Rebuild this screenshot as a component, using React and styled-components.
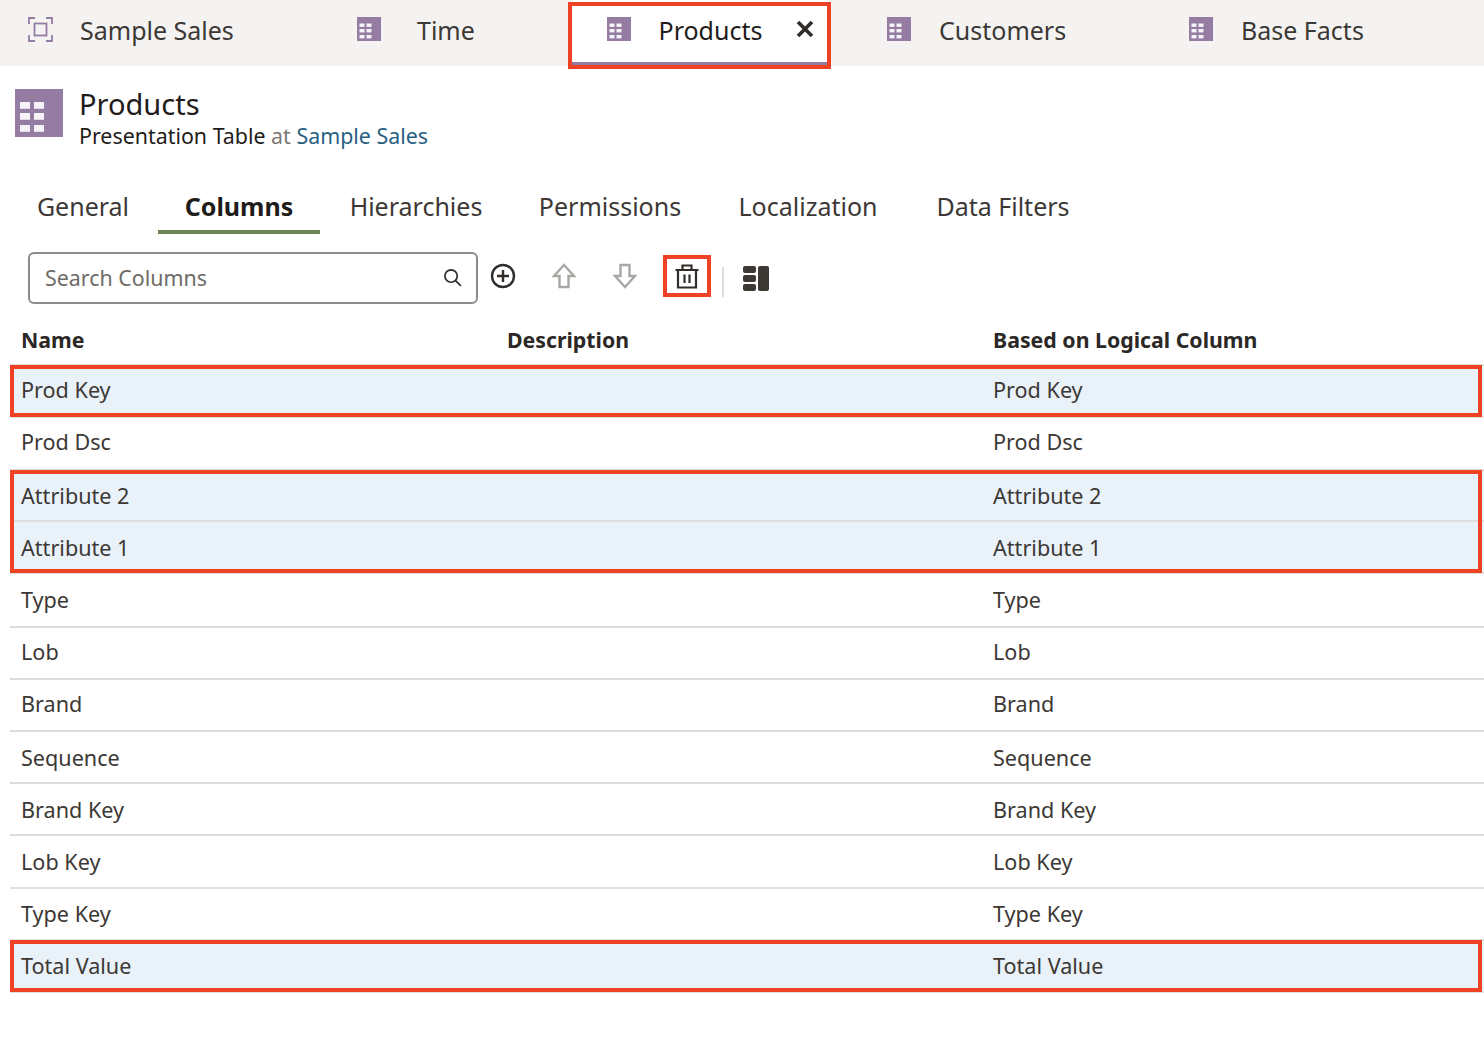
import React from "react";
import styled, { createGlobalStyle } from "styled-components";

const Global = createGlobalStyle`
  html, body { margin: 0; padding: 0; background: #fff; }
  body { font-family: "Noto Sans", "Open Sans", sans-serif; color: #312d2a; }
`;

const Page = styled.div`
  width: 1484px;
  height: 1053px;
  overflow: hidden;
`;

const TabBar = styled.div`
  display: flex;
  height: 66px;
  background: #f4f3f1;
`;

const Tab = styled.div`
  position: relative;
  box-sizing: border-box;
  display: flex;
  align-items: center;
  width: ${(p) => p.$w}px;
  padding-left: ${(p) => p.$pad}px;
  padding-bottom: 6px;
  gap: ${(p) => p.$gap}px;
  font-size: 25px;
  background: ${(p) => (p.$active ? "#fff" : "transparent")};
  color: ${(p) => (p.$active ? "#1f1c1a" : "#3c3835")};
  ${(p) => p.$active && "border-bottom: 4px solid #947ca3; padding-bottom: 2px;"}
  > svg:first-child {
    margin-top: -2px;
  }
  ${(p) =>
    p.$active &&
    `&::after {
      content: "";
      position: absolute;
      inset: 2px -3px -7px -3px;
      border: 4px solid #ef4123;
      pointer-events: none;
    }`}
`;

const Close = styled.svg`
  position: absolute;
  right: 14px;
  top: 20px;
`;

const Header = styled.div`
  display: flex;
  gap: 16px;
  padding: 23px 0 0 15px;
`;

const TitleBlock = styled.div`
  display: flex;
  flex-direction: column;
  margin-top: -3px;
`;

const Title = styled.div`
  font-size: 29px;
  line-height: 36px;
  color: #1f1c1a;
`;

const Subtitle = styled.div`
  font-size: 21.4px;
  line-height: 28px;
  color: #1f1c1a;
`;

const Muted = styled.span`
  color: #7a7672;
`;

const Link = styled.span`
  color: #29607f;
`;

const Tabs = styled.div`
  display: flex;
  margin: 32px 0 0 10px;
  height: 52px;
`;

const SubTab = styled.div`
  box-sizing: border-box;
  display: flex;
  align-items: center;
  justify-content: center;
  width: ${(p) => p.$w}px;
  height: 52px;
  padding-right: ${(p) => p.$pr || 0}px;
  font-size: 25px;
  font-weight: ${(p) => (p.$active ? 700 : 400)};
  color: ${(p) => (p.$active ? "#1f1c1a" : "#3c3835")};
  border-bottom: 4px solid ${(p) => (p.$active ? "#6b8355" : "transparent")};
`;

const Toolbar = styled.div`
  display: flex;
  align-items: center;
  height: 52px;
  margin: 18px 0 0 28px;
`;

const Search = styled.div`
  box-sizing: border-box;
  display: flex;
  align-items: center;
  justify-content: space-between;
  width: 450px;
  height: 52px;
  padding: 0 14px 2px 15px;
  border: 2px solid #8f8b87;
  border-radius: 6px;
  font-size: 21.4px;
  color: #6f6b67;
`;

const ToolButton = styled.div`
  box-sizing: border-box;
  flex: none;
  display: flex;
  align-items: center;
  justify-content: center;
  width: 48px;
  height: 42px;
  margin: 0 0 4px ${(p) => p.$left}px;
  ${(p) => p.$marked && "border: 4px solid #ef4123;"}
`;

const Divider = styled.div`
  flex: none;
  width: 2px;
  height: 30px;
  margin: 8px 19px 0 11px;
  background: #dfdedc;
`;

const PanelSlot = styled.div`
  display: flex;
`;

const Table = styled.div`
  margin: 12px 0 0 10px;
`;

const HeaderRow = styled.div`
  display: grid;
  grid-template-columns: 486px 486px 1fr;
  height: 50px;
  align-items: center;
  font-size: 21.3px;
  font-weight: 700;
  color: #2b2826;
  border-bottom: 2px solid #dfdedc;
  box-sizing: border-box;
`;

const Row = styled.div`
  box-sizing: border-box;
  display: grid;
  grid-template-columns: 486px 486px 1fr;
  height: ${(p) => p.$h}px;
  align-items: center;
  padding-bottom: ${(p) => p.$pb}px;
  font-size: 21.6px;
  color: #3c3835;
  background: ${(p) => (p.$selected ? "#e9f1f9" : "#fff")};
  border-bottom: 2px solid #dfdedc;
`;

const Cell = styled.div`
  padding-left: 11px;
`;

const HeadCell = styled(Cell)`
  padding-bottom: 2px;
`;

const Group = styled.div`
  position: relative;
  &::after {
    content: "";
    position: absolute;
    inset: -1px 2px 1px 0;
    border: 4px solid #ef4123;
    pointer-events: none;
  }
`;

const TableIcon = ({ size = 24 }) => {
  const xs = [2.5, 9.5];
  const ys = [6.5, 12, 18];
  return (
    <svg width={size} height={size} viewBox="0 0 24 24" style={{ flex: "none", display: "block" }}>
      <rect width="24" height="24" fill="#947ca3" />
      {ys.map((y) =>
        xs.map((x) => <rect key={`${x}-${y}`} x={x} y={y} width="5" height="3.4" fill="#f6f3f8" />)
      )}
    </svg>
  );
};

const SubjectIcon = () => (
  <svg width="25" height="25" viewBox="0 0 25 25" fill="none" stroke="#947ca3" strokeWidth="1.8" style={{ flex: "none" }}>
    <path d="M1 7V1h6M18 1h6v6M24 18v6h-6M7 24H1v-6" />
    <rect x="6.5" y="6.5" width="12" height="12" />
  </svg>
);

const SearchIcon = () => (
  <svg width="19" height="19" viewBox="0 0 20 20" fill="none" stroke="#312d2a" strokeWidth="1.8">
    <circle cx="8.5" cy="8.5" r="6.5" />
    <path d="M13.2 13.2l5.6 5.6" />
  </svg>
);

const PlusIcon = () => (
  <svg width="26" height="26" viewBox="0 0 26 26" fill="none" stroke="#312d2a" strokeWidth="2.4">
    <circle cx="13" cy="13" r="11" />
    <path d="M13 7v12M7 13h12" />
  </svg>
);

const UpIcon = () => (
  <svg width="24" height="26" viewBox="0 0 24 26" fill="none" stroke="#a9a7a4" strokeWidth="2.4">
    <path d="M12 2L2 13h5.5v11h9V13H22z" />
  </svg>
);

const DownIcon = () => (
  <svg width="24" height="26" viewBox="0 0 24 26" fill="none" stroke="#a9a7a4" strokeWidth="2.4">
    <path d="M12 24L2 13h5.5V2h9v11H22z" />
  </svg>
);

const TrashIcon = () => (
  <svg width="24" height="25" viewBox="0 0 24 25" fill="none" stroke="#312d2a" strokeWidth="2.2">
    <path d="M0.5 6h23M7.5 6V1.5h9V6M3 6v17.5h18V6M9.5 10.5v8.5M14.5 10.5v8.5" />
  </svg>
);

const PanelIcon = () => (
  <svg width="26" height="26" viewBox="0 0 26 26" fill="#3c3833">
    <rect x="0" y="1" width="13" height="7" rx="2" />
    <rect x="0" y="10" width="13" height="7" rx="2" />
    <rect x="0" y="19" width="13" height="7" rx="2" />
    <rect x="15" y="1" width="11" height="25" rx="2" />
  </svg>
);

const tabs = [
  { label: "Sample Sales", w: 321, pad: 28, gap: 27, subject: true },
  { label: "Time", w: 250, pad: 36, gap: 36 },
  { label: "Products", w: 257, pad: 36, gap: 27.5, active: true },
  { label: "Customers", w: 302, pad: 59, gap: 28 },
  { label: "Base Facts", w: 354, pad: 59, gap: 28 },
];

const subTabs = [
  { label: "General", w: 148, pr: 2 },
  { label: "Columns", w: 162, active: true },
  { label: "Hierarchies", w: 192 },
  { label: "Permissions", w: 196 },
  { label: "Localization", w: 200 },
  { label: "Data Filters", w: 190 },
];

const Columns = ({ name, h, pb, selected }) => (
  <Row $h={h} $pb={pb} $selected={selected}>
    <Cell>{name}</Cell>
    <Cell />
    <Cell>{name}</Cell>
  </Row>
);

export default function App() {
  return (
    <Page>
      <Global />
      <TabBar>
        {tabs.map((t) => (
          <Tab key={t.label} $w={t.w} $pad={t.pad} $gap={t.gap} $active={t.active}>
            {t.subject ? <SubjectIcon /> : <TableIcon />}
            <span>{t.label}</span>
            {t.active && (
              <Close width="18" height="18" viewBox="0 0 18 18" stroke="#312d2a" strokeWidth="3.6" fill="none">
                <path d="M2 2l14 14M16 2L2 16" />
              </Close>
            )}
          </Tab>
        ))}
      </TabBar>
      <Header>
        <TableIcon size={48} />
        <TitleBlock>
          <Title>Products</Title>
          <Subtitle>
            Presentation Table <Muted>at</Muted> <Link>Sample Sales</Link>
          </Subtitle>
        </TitleBlock>
      </Header>
      <Tabs>
        {subTabs.map((t) => (
          <SubTab key={t.label} $w={t.w} $pr={t.pr} $active={t.active}>
            {t.label}
          </SubTab>
        ))}
      </Tabs>
      <Toolbar>
        <Search>
          Search Columns
          <SearchIcon />
        </Search>
        <ToolButton $left={1}><PlusIcon /></ToolButton>
        <ToolButton $left={13}><UpIcon /></ToolButton>
        <ToolButton $left={13}><DownIcon /></ToolButton>
        <ToolButton $left={14} $marked><TrashIcon /></ToolButton>
        <Divider />
        <PanelSlot><PanelIcon /></PanelSlot>
      </Toolbar>
      <Table>
        <HeaderRow>
          <HeadCell>Name</HeadCell>
          <HeadCell>Description</HeadCell>
          <HeadCell>Based on Logical Column</HeadCell>
        </HeaderRow>
        <Group><Columns name="Prod Key" h={52} pb={4} selected /></Group>
        <Columns name="Prod Dsc" h={53} pb={4} />
        <Group>
          <Columns name="Attribute 2" h={51} pb={0} selected />
          <Columns name="Attribute 1" h={52} pb={0} selected />
        </Group>
        <Columns name="Type" h={54} pb={2} />
        <Columns name="Lob" h={52} pb={4} />
        <Columns name="Brand" h={52} pb={4} />
        <Columns name="Sequence" h={52} pb={0} />
        <Columns name="Brand Key" h={52} pb={0} />
        <Columns name="Lob Key" h={53} pb={0} />
        <Columns name="Type Key" h={52} pb={2} />
        <Group><Columns name="Total Value" h={52} pb={2} selected /></Group>
      </Table>
    </Page>
  );
}
